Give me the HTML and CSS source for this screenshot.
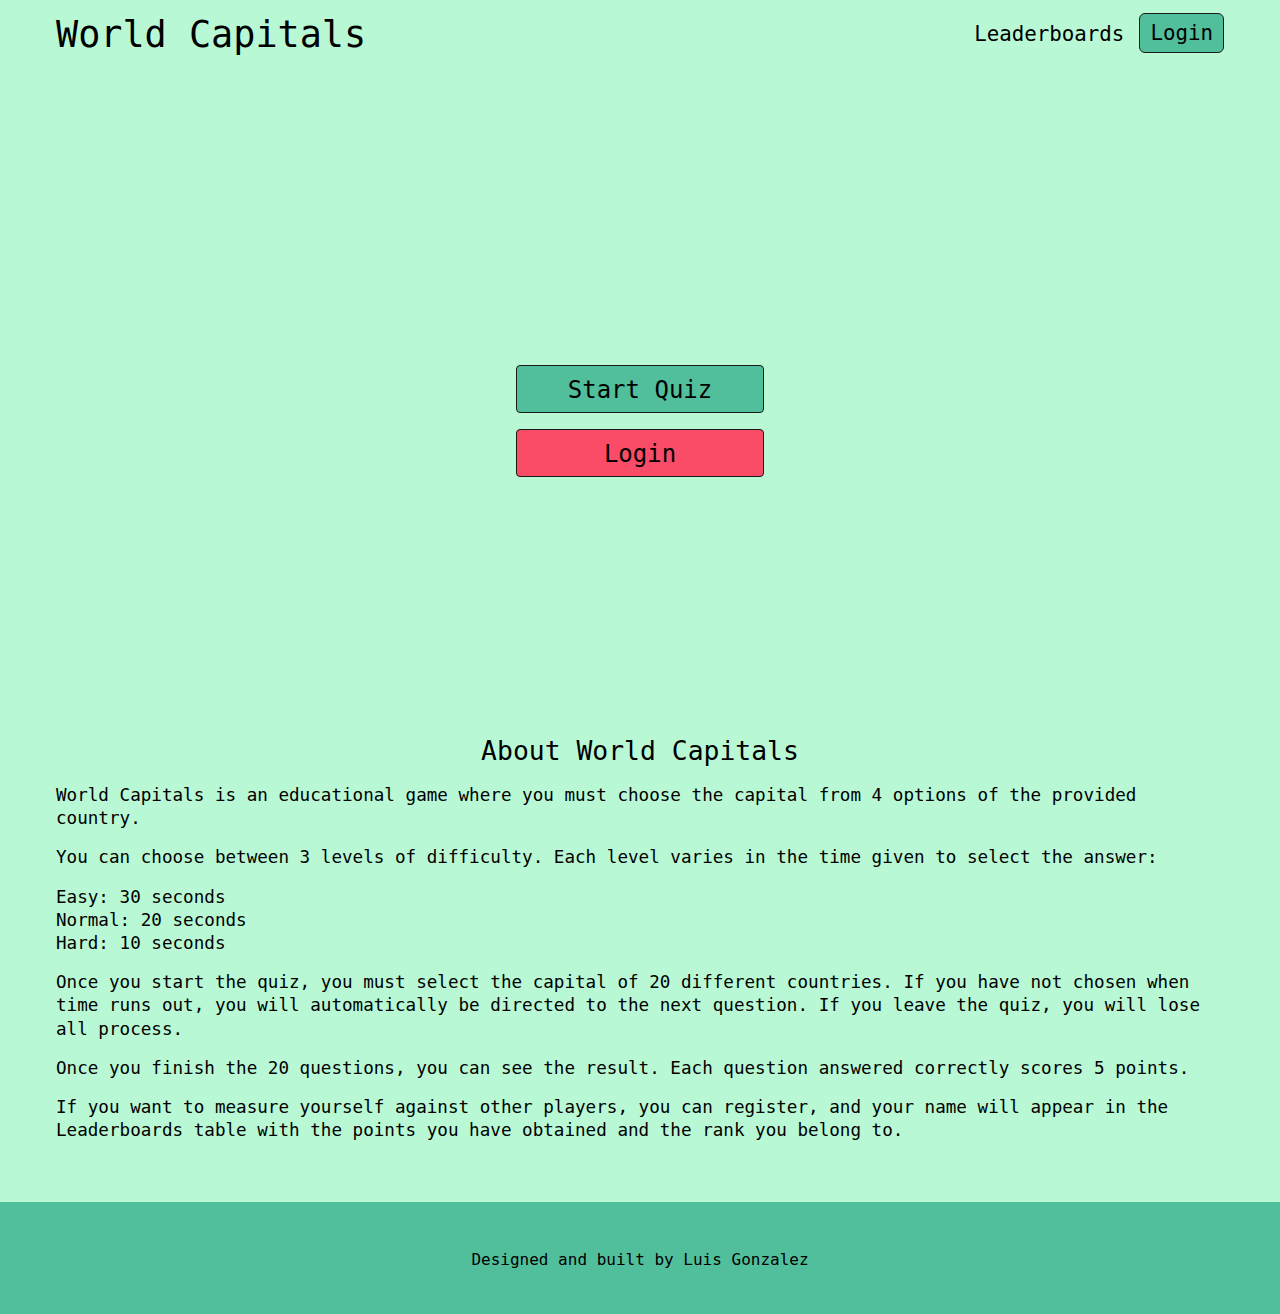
FILE: index.html
```html
<!DOCTYPE html>
<html lang="en">
<head>
<meta charset="utf-8">
<title>World Capitals</title>
<link rel="stylesheet" href="styles.css">
</head>
<body>
<header class="site-header">
  <h1 class="logo">World Capitals</h1>
  <nav class="nav">
    <a class="nav-link" href="#">Leaderboards</a>
    <a class="nav-login" href="#">Login</a>
  </nav>
</header>
<main>
  <section class="hero">
    <button class="btn btn-start">Start Quiz</button>
    <button class="btn btn-login">Login</button>
  </section>
  <section class="about">
    <h2 class="about-title">About World Capitals</h2>
    <p>World Capitals is an educational game where you must choose the capital from 4 options of the provided country.</p>
    <p>You can choose between 3 levels of difficulty. Each level varies in the time given to select the answer:</p>
    <p>Easy: 30 seconds<br>Normal: 20 seconds<br>Hard: 10 seconds</p>
    <p>Once you start the quiz, you must select the capital of 20 different countries. If you have not chosen when time runs out, you will automatically be directed to the next question. If you leave the quiz, you will lose all process.</p>
    <p>Once you finish the 20 questions, you can see the result. Each question answered correctly scores 5 points.</p>
    <p>If you want to measure yourself against other players, you can register, and your name will appear in the Leaderboards table with the points you have obtained and the rank you belong to.</p>
  </section>
</main>
<footer class="site-footer">
  <p>Designed and built by Luis Gonzalez</p>
</footer>
</body>
</html>
```
FILE: styles.css
```css
* { box-sizing: border-box; }
html, body {
  margin: 0;
  padding: 0;
}
body {
  background: #b9f8d4;
  color: #000;
  font-family: "DejaVu Sans Mono", "Liberation Mono", monospace;
  font-size: 17.6px;
  line-height: 1.32;
}
.site-header {
  display: flex;
  justify-content: space-between;
  align-items: center;
  padding: 9px 56px;
  height: 66px;
}
.logo {
  margin: 0;
  font-size: 36.8px;
  font-weight: 400;
  line-height: 1.32;
  padding-top: 4px;
}
.nav {
  display: flex;
  align-items: center;
  gap: 15px;
}
.nav-link, .nav-login {
  color: #000;
  text-decoration: none;
  font-size: 20.8px;
  line-height: 1.32;
}
.nav-link {
  padding-top: 3px;
}
.nav-login {
  background: #52bf9c;
  border: 1px solid #1a1a1a;
  border-radius: 6px;
  padding: 6px 10px 4px;
}
.hero {
  display: flex;
  flex-direction: column;
  align-items: center;
  gap: 16px;
  padding: 299px 0 257px;
}
.btn {
  width: 248px;
  height: 48px;
  border: 1px solid #1a1a1a;
  border-radius: 4px;
  font-family: inherit;
  font-size: 24px;
  line-height: 1.32;
  color: #000;
  padding: 3px 0 0;
  cursor: pointer;
}
.btn-start { background: #52bf9c; }
.btn-login { background: #fa4b67; }
.about {
  padding: 0 56px 44px;
}
.about-title {
  margin: 0 0 15px;
  text-align: center;
  font-size: 26.4px;
  font-weight: 400;
  line-height: 1.32;
}
.about p {
  margin: 0 0 16px;
}
.site-footer {
  background: #52bf9c;
  height: 112px;
  display: flex;
  align-items: center;
  justify-content: center;
}
.site-footer p {
  margin: 0;
  font-size: 16px;
  padding-top: 2px;
}
```
